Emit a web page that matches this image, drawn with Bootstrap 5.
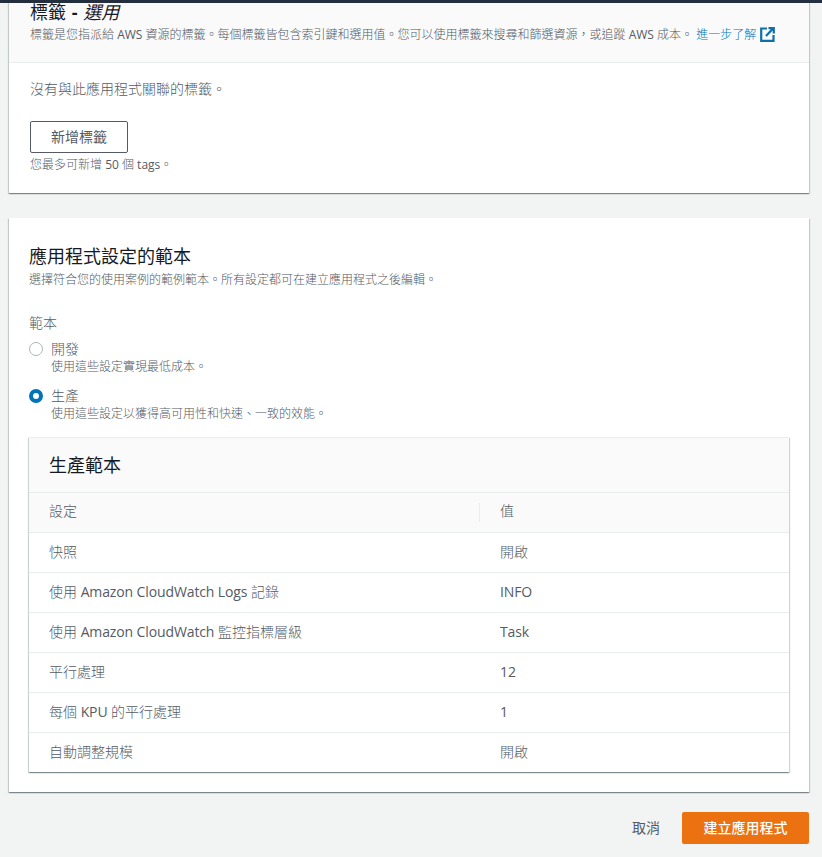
<!DOCTYPE html>
<html lang="zh-Hant">
<head>
<meta charset="utf-8">
<title>建立應用程式</title>
<link href="https://cdn.jsdelivr.net/npm/bootstrap@5.3.0/dist/css/bootstrap.min.css" rel="stylesheet">
<style>
html,body{height:857px;overflow:hidden}
body{background:#f2f3f3;color:#16191f;font-family:"Open Sans","Noto Sans CJK TC",sans-serif;font-size:14px;line-height:20px;position:relative;font-weight:300}
.lat{font-weight:400}
.topbar{position:absolute;top:0;left:0;right:0;height:3px;background:#232f3e;z-index:5}
.page{padding:0 13px 0 9px;margin-top:-12px}
.panel{background:#fff;box-shadow:0 1px 1px 0 rgba(0,28,36,.3),1px 1px 1px 0 rgba(0,28,36,.15),-1px 1px 1px 0 rgba(0,28,36,.15)}
.panel-one{height:205px;margin-bottom:25px}
.panel-two{height:574px;padding:26px 20px 20px}
.head-one{height:75px;background:#fafafa;border-bottom:1px solid #eaeded;padding:12px 21px 0}
.h-title{font-size:18px;line-height:24px;font-weight:400;margin:0}
.h-first{word-spacing:1px}
.h-first b{font-weight:700}
.desc{font-size:12px;line-height:16px;color:#545b64}
.head-one .desc{margin-top:3px}
.link-blue{color:#0073bb;text-decoration:none}
.ext{width:15px;height:15px;margin-left:4px;vertical-align:-3px}
.body-one{padding:16px 21px 0}
.muted{color:#545b64}
.btn-aws{display:block;width:98px;height:32px;margin-top:22px;background:#fff;border:1px solid #545b64;border-radius:2px;color:#545b64;font-weight:400;font-size:14px;padding:0;line-height:30px;text-align:center}
.radio-dot{width:14px;height:14px;border-radius:50%;border:1px solid #aab7b8;flex:none;margin-top:3px;background:#fff}
.radio-dot.on{border:4px solid #0073bb}
.radio-row{gap:8px}
.tpl-label{margin-top:25px}
.radio-first{margin-top:6px}
.radio-second{margin-top:11px}
.radio-sub{font-size:12px;line-height:16px;color:#545b64}
.tpl{margin-top:15px;box-shadow:0 1px 1px 0 rgba(0,28,36,.3),1px 1px 1px 0 rgba(0,28,36,.15),-1px 1px 1px 0 rgba(0,28,36,.15)}
.tpl-head{height:56px;background:#fafafa;border-top:1px solid #eaeded;border-bottom:1px solid #eaeded;padding:0 20px;font-size:18px;font-weight:400;line-height:54px}
.tpl-table{width:100%;table-layout:fixed;border-collapse:collapse}
.tpl-table th,.tpl-table td{height:40px;padding:0 20px;border-bottom:1px solid #eaeded;font-size:14px;font-weight:300;color:#545b64}
.tpl-table .lat{letter-spacing:-.12px}
.tpl-table tr:last-child td{border-bottom:0}
.tpl-table th{height:39px;padding-bottom:2px;background:#fafafa;position:relative}
.tpl-table th:first-child{width:451px}
.tpl-table th:first-child::after{content:"";position:absolute;right:0;top:10px;height:19px;border-right:1px solid #eaeded}
.foot{margin-top:20px;gap:22px}
.cancel{color:#545b64;font-weight:400;font-size:14px;background:none;border:0;padding:0}
.primary-aws{width:127px;height:32px;background:#ec7211;border:0;border-radius:2px;color:#fff;font-weight:500;font-size:14px;padding:0}
</style>
</head>
<body>
<div class="topbar"></div>
<div class="page">
  <section class="panel panel-one">
    <div class="head-one">
      <h2 class="h-title h-first">標籤 <b>-</b> <em>選用</em></h2>
      <div class="desc">標籤是您指派給 <span class="lat">AWS</span> 資源的標籤。每個標籤皆包含索引鍵和選用值。您可以使用標籤來搜尋和篩選資源，或追蹤 <span class="lat">AWS</span> 成本。 <a href="#" class="link-blue">進一步了解<svg class="ext" viewBox="0 0 15 15" fill="none" stroke="#0f6fa8" stroke-width="2.200"><path d="M7 1.500H1.200v12.300h12.300V8"/><path d="M6 9l7-7.500M8.500 1.200h5.300V6.500"/></svg></a></div>
    </div>
    <div class="body-one">
      <div class="muted">沒有與此應用程式關聯的標籤。</div>
      <button type="button" class="btn-aws">新增標籤</button>
      <div class="desc mt-1">您最多可新增 <span class="lat">50</span> 個 <span class="lat">tags</span>。</div>
    </div>
  </section>
  <section class="panel panel-two">
    <h2 class="h-title">應用程式設定的範本</h2>
    <div class="desc mt-1">選擇符合您的使用案例的範例範本。所有設定都可在建立應用程式之後編輯。</div>
    <div class="tpl-label muted">範本</div>
    <div class="d-flex radio-row radio-first">
      <span class="radio-dot"></span>
      <div><div class="muted">開發</div><div class="radio-sub">使用這些設定實現最低成本。</div></div>
    </div>
    <div class="d-flex radio-row radio-second">
      <span class="radio-dot on"></span>
      <div><div class="muted">生產</div><div class="radio-sub">使用這些設定以獲得高可用性和快速、一致的效能。</div></div>
    </div>
    <div class="tpl">
      <div class="tpl-head">生產範本</div>
      <table class="tpl-table">
        <thead><tr><th>設定</th><th>值</th></tr></thead>
        <tbody>
          <tr><td>快照</td><td>開啟</td></tr>
          <tr><td>使用 <span class="lat">Amazon CloudWatch Logs</span> 記錄</td><td><span class="lat">INFO</span></td></tr>
          <tr><td>使用 <span class="lat">Amazon CloudWatch</span> 監控指標層級</td><td><span class="lat">Task</span></td></tr>
          <tr><td>平行處理</td><td><span class="lat">12</span></td></tr>
          <tr><td>每個 <span class="lat">KPU</span> 的平行處理</td><td><span class="lat">1</span></td></tr>
          <tr><td>自動調整規模</td><td>開啟</td></tr>
        </tbody>
      </table>
    </div>
  </section>
  <div class="d-flex justify-content-end align-items-center foot">
    <button type="button" class="cancel">取消</button>
    <button type="button" class="primary-aws">建立應用程式</button>
  </div>
</div>
<script src="https://cdn.jsdelivr.net/npm/bootstrap@5.3.0/dist/js/bootstrap.bundle.min.js"></script>
</body>
</html>
